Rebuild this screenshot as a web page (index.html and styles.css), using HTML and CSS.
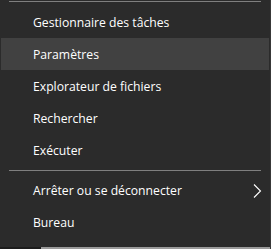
FILE: index.html
```
<!DOCTYPE html>
<html>
<head>
<meta charset="utf-8">
<link rel="stylesheet" href="styles.css">
</head>
<body>
<div class="screen">
  <div class="menu">
    <div class="sep sep-top"></div>
    <div class="item">Gestionnaire des tâches</div>
    <div class="item active">Paramètres</div>
    <div class="item">Explorateur de fichiers</div>
    <div class="item">Rechercher</div>
    <div class="item">Exécuter</div>
    <div class="sep"></div>
    <div class="item has-sub">
      <span>Arrêter ou se déconnecter</span>
      <svg class="chev" width="9" height="14" viewBox="0 0 9 14"><path d="M1 0.5 L7.5 7 L1 13.5" fill="none" stroke="#ffffff" stroke-width="1.1"/></svg>
    </div>
    <div class="item">Bureau</div>
  </div>
  <div class="taskbar">
    <div class="tb-left"></div>
    <div class="tb-right"></div>
  </div>
</div>
</body>
</html>
```
FILE: styles.css
```
html, body {
  margin: 0;
  padding: 0;
  background: #2b2b2b;
}
.screen {
  width: 271px;
  height: 249px;
  display: flex;
  flex-direction: column;
  box-sizing: border-box;
  border-right: 1px solid #383838;
}
.menu {
  flex: 1;
  display: flex;
  flex-direction: column;
  font-family: "Open Sans", "Noto Sans", sans-serif;
  font-size: 12.2px;
  color: #ffffff;
}
.sep {
  height: 1px;
  background: #7f7f7f;
  margin: 4px 9px 3px 9px;
}
.sep-top {
  margin: 1px 9px 4px 9px;
}
.item {
  height: 32px;
  display: flex;
  align-items: center;
  justify-content: space-between;
  padding: 0 7px 0 32px;
  margin: 0 1px 0 1px;
  box-sizing: border-box;
}
.item.active {
  background: #414141;
}
.chev {
  display: block;
  margin-top: 1px;
}
.taskbar {
  height: 2px;
  display: flex;
}
.tb-left {
  width: 41px;
  background: #1c1c1c;
}
.tb-right {
  flex: 1;
  background: #9b9b9b;
}
```
